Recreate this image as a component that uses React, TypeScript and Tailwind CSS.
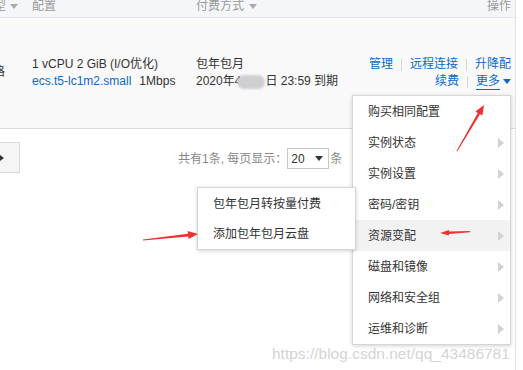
const Caret = ({ className = "" }: { className?: string }) => (
  <svg width="8" height="5" viewBox="0 0 8 5" className={className}>
    <path d="M0 0h8L4 5z" fill="currentColor" />
  </svg>
);

const Sep = () => <span className="mx-[8px] inline-block h-[12px] w-px bg-[#d5d5d5]" />;

const RightTri = () => (
  <svg width="6" height="10" viewBox="0 0 6 10" className="text-[#d2d2d2]">
    <path d="M0 0l6 5-6 5z" fill="currentColor" />
  </svg>
);

const menuItems = [
  { label: "购买相同配置", sub: false },
  { label: "实例状态", sub: true },
  { label: "实例设置", sub: true },
  { label: "密码/密钥", sub: true },
  { label: "资源变配", sub: true, active: true },
  { label: "磁盘和镜像", sub: true },
  { label: "网络和安全组", sub: true },
  { label: "运维和诊断", sub: true },
];

export default function App() {
  return (
    <div className="relative h-[370px] w-[523px] overflow-hidden bg-white font-['Liberation_Sans','Noto_Sans_CJK_SC',sans-serif] text-[12px] text-[#333]">
      <div className="h-full w-[516px] border-r border-[#e2e2e2]">
        {/* header */}
        <div className="flex h-[18px] items-start border-b border-[#e3e6eb] bg-[#f5f6f9] text-[#999] leading-[12px]">
          <div className="flex w-[32px] items-center">
            <span className="-ml-[6px]">型</span>
            <Caret className="ml-[4px] text-[#aaa]" />
          </div>
          <div className="w-[164px]">配置</div>
          <div className="flex items-center">
            <span>付费方式</span>
            <Caret className="ml-[5px] text-[#aaa]" />
          </div>
          <div className="ml-auto pr-[4px]">操作</div>
        </div>

        {/* row */}
        <div className="flex h-[111px] border-b border-[#dcdcdc] bg-[#f9f9f9] pt-[38px] leading-[17px]">
          <div className="w-[32px] pt-[8px]">
            <span className="-ml-[7px]">格</span>
          </div>
          <div className="w-[164px]">
            <div>1 vCPU 2 GiB (I/O优化)</div>
            <div>
              <span className="text-[#0a6acb]">ecs.t5-lc1m2.small</span>
              <span className="ml-[8px]">1Mbps</span>
            </div>
          </div>
          <div>
            <div>包年包月</div>
            <div className="flex items-center">
              <span>2020年4</span>
              <span className="-ml-[4px] inline-block h-[14px] w-[28px] rounded-full bg-[#cfcfd2] blur-[1px]" />
              <span>日 23:59 到期</span>
            </div>
          </div>
          <div className="ml-auto flex flex-col items-end pr-[4px] text-[#0a6acb]">
            <div className="flex items-center">
              <span>管理</span>
              <Sep />
              <span>远程连接</span>
              <Sep />
              <span>升降配</span>
            </div>
            <div className="flex items-center">
              <span>续费</span>
              <Sep />
              <span className="border-b border-[#0a6acb] leading-[15px]">更多</span>
              <Caret className="ml-[3px] text-[#0a6acb]" />
            </div>
          </div>
        </div>

        {/* pagination */}
        <div className="flex items-start pt-[13px]">
          <div className="flex h-[31px] w-[20px] items-center border border-l-0 border-[#d9d9d9] bg-[#f5f5f5]">
            <svg width="4" height="6" viewBox="0 0 4 6">
              <path d="M0 0l4 3-4 3z" fill="#333" />
            </svg>
          </div>
          <div className="ml-[158px] mt-[6px] flex items-center text-[#888] leading-[20px]">
            <span>共有1条, 每页显示：</span>
            <div className="flex h-[21px] w-[42px] items-center border border-[#c8c8c8] bg-white pl-[3px] text-[#333]">
              <span>20</span>
              <Caret className="ml-[10px] text-[#333]" />
            </div>
            <span className="ml-[1px]">条</span>
          </div>
        </div>
      </div>

      {/* main dropdown */}
      <div className="absolute left-[352px] top-[95px] z-10 w-[159px] border border-[#d6d6d6] bg-white shadow-[0_1px_4px_rgba(0,0,0,0.18)]">
        {menuItems.map((m) => (
          <div
            key={m.label}
            className={`flex h-[31px] items-center justify-between pl-[15px] pr-[6px] ${m.active ? "bg-[#f2f2f2]" : ""}`}
          >
            <span>{m.label}</span>
            {m.sub && <RightTri />}
          </div>
        ))}
      </div>

      {/* submenu */}
      <div className="absolute left-[197px] top-[187px] z-20 w-[159px] border border-[#d6d6d6] bg-white shadow-[0_1px_4px_rgba(0,0,0,0.18)]">
        <div className="flex h-[31px] items-center pl-[15px]">包年包月转按量付费</div>
        <div className="flex h-[30px] items-center pl-[15px]">添加包年包月云盘</div>
      </div>

      {/* annotation arrows */}
      <svg className="pointer-events-none absolute left-0 top-0 z-30" width="523" height="370" viewBox="0 0 523 370">
        <polygon points="456.6,150.7 477.8,113.0 475.5,111.6 484,105 482.4,115.6 480.0,114.3 457.4,151.3" fill="#f23030" />
        <polygon points="470,231 449,231.4 449,229.9 440,233 449,235.6 449,234 470,232.2" fill="#f23030" />
        <polygon points="142.9,239.4 188.0,233.8 187.7,231.1 198,234 188.5,239.1 188.2,236.4 143.1,240.6" fill="#f23030" />
      </svg>

      {/* watermark */}
      <div className="pointer-events-none absolute left-[272px] top-[345px] z-30 font-['Liberation_Sans',sans-serif] text-[15.5px] leading-[18px] text-[#d4d4d4]">
        https://blog.csdn.net/qq_43486781
      </div>
    </div>
  );
}
